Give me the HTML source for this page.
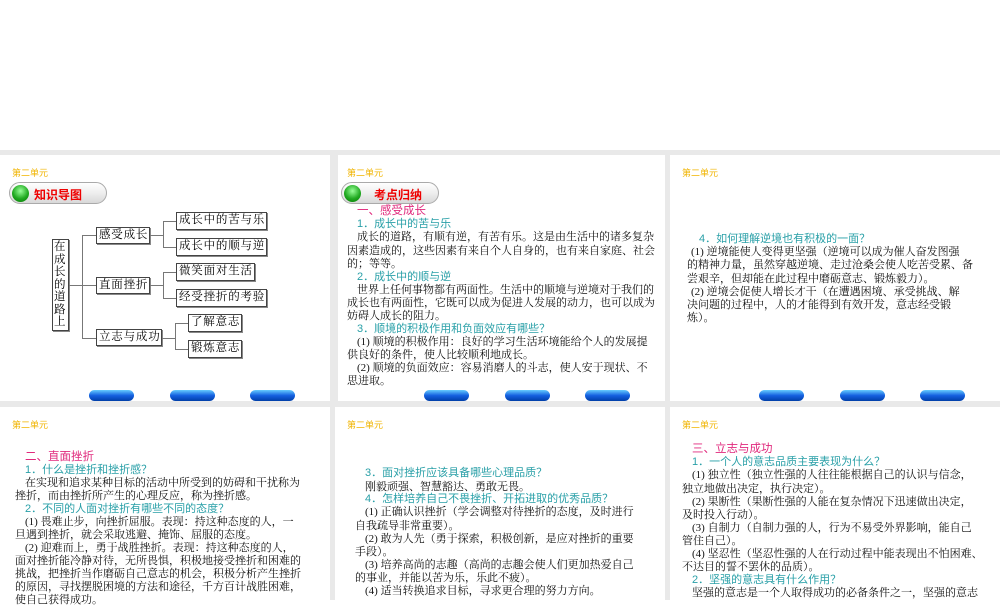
<!DOCTYPE html>
<html><head><meta charset="utf-8"><style>
*{margin:0;padding:0;box-sizing:border-box}
body{width:1000px;height:600px;background:#fff;position:relative;overflow:hidden;font-family:"Liberation Serif","Noto Serif CJK SC","Noto Sans CJK SC",serif}
.bg{position:absolute;left:0;top:150px;width:1000px;height:450px;background:#e9e9e9}
.s{position:absolute;background:#fff;overflow:hidden}
.u{position:absolute;left:12px;top:166px;font-size:9px;color:#f0b400;font-family:"Liberation Sans","Noto Sans CJK SC",sans-serif}
.pill{position:absolute;width:98px;height:22px;border:1px solid #aaa;border-radius:11px;background:linear-gradient(#fff,#eee 50%,#d8d8d8);}
.pill i{position:absolute;left:2px;top:2px;width:17px;height:17px;border-radius:50%;background:radial-gradient(circle at 50% 35%,#9f9,#2a2 55%,#070);}
.pill b{position:absolute;top:3px;font-size:12px;color:#e00;font-family:"Liberation Sans","Noto Sans CJK SC",sans-serif}
.btn{position:absolute;width:45px;height:11px;border-radius:6px;background:linear-gradient(#6cf,#1560e0 50%,#003fa8);}
.l{position:absolute;white-space:nowrap;font-size:11px;line-height:13px;color:#111}
.p{color:#e0287c;font-family:"Liberation Sans","Noto Sans CJK SC",sans-serif;font-size:11.5px}
.t{color:#2aa0a8;font-family:"Liberation Sans","Noto Sans CJK SC",sans-serif}
.bx{position:absolute;border:1px solid #444;box-shadow:1px 1px 0 #888;font-size:11.5px;letter-spacing:0.8px;line-height:15px;padding-left:2px;white-space:nowrap;background:#fff;overflow:hidden}
.ln{position:absolute;background:#777}
</style></head><body>
<div class="bg"></div>
<div class="s" style="left:0;top:155px;width:330px;height:246px"></div>
<div class="s" style="left:338px;top:155px;width:327px;height:246px"></div>
<div class="s" style="left:670px;top:155px;width:330px;height:246px"></div>
<div class="s" style="left:0;top:407px;width:330px;height:193px"></div>
<div class="s" style="left:335px;top:407px;width:330px;height:193px"></div>
<div class="s" style="left:670px;top:407px;width:330px;height:193px"></div>

<div class="u">第二单元</div>
<div class="u" style="left:347px">第二单元</div>
<div class="u" style="left:682px">第二单元</div>
<div class="u" style="top:418px">第二单元</div>
<div class="u" style="left:347px;top:418px">第二单元</div>
<div class="u" style="left:682px;top:418px">第二单元</div>

<div class="pill" style="left:9px;top:182px"><i></i><b style="left:24px">知识导图</b></div>
<div class="pill" style="left:341px;top:182px"><i></i><b style="left:32px">考点归纳</b></div>

<div class="btn" style="left:89px;top:390px"></div><div class="btn" style="left:170px;top:390px"></div><div class="btn" style="left:250px;top:390px"></div>
<div class="btn" style="left:424px;top:390px"></div><div class="btn" style="left:505px;top:390px"></div><div class="btn" style="left:585px;top:390px"></div>
<div class="btn" style="left:759px;top:390px"></div><div class="btn" style="left:840px;top:390px"></div><div class="btn" style="left:920px;top:390px"></div>

<div class="bx" style="left:52px;top:239px;width:17px;height:92px;white-space:normal;padding:1px 1px;letter-spacing:0;line-height:12.5px">在成长的道路上</div>
<div class="ln" style="left:69px;top:285px;width:13px;height:1px"></div>
<div class="ln" style="left:82px;top:235px;width:1px;height:103px"></div>
<div class="ln" style="left:82px;top:235px;width:14px;height:1px"></div>
<div class="ln" style="left:82px;top:285px;width:14px;height:1px"></div>
<div class="ln" style="left:82px;top:338px;width:14px;height:1px"></div>
<div class="bx" style="left:96px;top:227px;width:54px;height:17px">感受成长</div>
<div class="bx" style="left:96px;top:277px;width:54px;height:17px">直面挫折</div>
<div class="bx" style="left:96px;top:329px;width:66px;height:17px">立志与成功</div>
<div class="ln" style="left:150px;top:235px;width:13px;height:1px"></div>
<div class="ln" style="left:163px;top:221px;width:1px;height:26px"></div>
<div class="ln" style="left:163px;top:221px;width:13px;height:1px"></div>
<div class="ln" style="left:163px;top:247px;width:13px;height:1px"></div>
<div class="ln" style="left:150px;top:285px;width:13px;height:1px"></div>
<div class="ln" style="left:163px;top:272px;width:1px;height:26px"></div>
<div class="ln" style="left:163px;top:272px;width:13px;height:1px"></div>
<div class="ln" style="left:163px;top:298px;width:13px;height:1px"></div>
<div class="ln" style="left:162px;top:338px;width:13px;height:1px"></div>
<div class="ln" style="left:175px;top:323px;width:1px;height:26px"></div>
<div class="ln" style="left:175px;top:323px;width:13px;height:1px"></div>
<div class="ln" style="left:175px;top:349px;width:13px;height:1px"></div>
<div class="bx" style="left:176px;top:212px;width:91px;height:18px">成长中的苦与乐</div>
<div class="bx" style="left:176px;top:238px;width:91px;height:18px">成长中的顺与逆</div>
<div class="bx" style="left:176px;top:263px;width:79px;height:18px">微笑面对生活</div>
<div class="bx" style="left:176px;top:289px;width:91px;height:18px">经受挫折的考验</div>
<div class="bx" style="left:188px;top:314px;width:54px;height:18px">了解意志</div>
<div class="bx" style="left:188px;top:340px;width:54px;height:18px">锻炼意志</div>

<div class="l p" style="left:357px;top:205px">一、感受成长</div>
<div class="l t" style="left:357px;top:218px">1．成长中的苦与乐</div>
<div class="l" style="left:357px;top:231px">成长的道路，有顺有逆，有苦有乐。这是由生活中的诸多复杂</div>
<div class="l" style="left:347px;top:245px">因素造成的，这些因素有来自个人自身的，也有来自家庭、社会</div>
<div class="l" style="left:347px;top:258px">的；等等。</div>
<div class="l t" style="left:357px;top:271px">2．成长中的顺与逆</div>
<div class="l" style="left:357px;top:284px">世界上任何事物都有两面性。生活中的顺境与逆境对于我们的</div>
<div class="l" style="left:347px;top:297px">成长也有两面性，它既可以成为促进人发展的动力，也可以成为</div>
<div class="l" style="left:347px;top:310px">妨碍人成长的阻力。</div>
<div class="l t" style="left:357px;top:323px">3．顺境的积极作用和负面效应有哪些？</div>
<div class="l" style="left:357px;top:336px">(1) 顺境的积极作用：良好的学习生活环境能给个人的发展提</div>
<div class="l" style="left:347px;top:349px">供良好的条件，使人比较顺利地成长。</div>
<div class="l" style="left:357px;top:362px">(2) 顺境的负面效应：容易消磨人的斗志，使人安于现状、不</div>
<div class="l" style="left:347px;top:375px">思进取。</div>

<div class="l t" style="left:699px;top:233px">4．如何理解逆境也有积极的一面？</div>
<div class="l" style="left:691px;top:246px">(1) 逆境能使人变得更坚强（逆境可以成为催人奋发图强</div>
<div class="l" style="left:687px;top:259px">的精神力量，虽然穿越逆境、走过沧桑会使人吃苦受累、备</div>
<div class="l" style="left:687px;top:273px">尝艰辛，但却能在此过程中磨砺意志、锻炼毅力）。</div>
<div class="l" style="left:691px;top:286px">(2) 逆境会促使人增长才干（在遭遇困境、承受挑战、解</div>
<div class="l" style="left:687px;top:299px">决问题的过程中，人的才能得到有效开发，意志经受锻</div>
<div class="l" style="left:687px;top:312px">炼）。</div>

<div class="l p" style="left:25px;top:451px">二、直面挫折</div>
<div class="l t" style="left:25px;top:464px">1．什么是挫折和挫折感？</div>
<div class="l" style="left:25px;top:477px">在实现和追求某种目标的活动中所受到的妨碍和干扰称为</div>
<div class="l" style="left:15px;top:490px">挫折，而由挫折所产生的心理反应，称为挫折感。</div>
<div class="l t" style="left:25px;top:503px">2．不同的人面对挫折有哪些不同的态度？</div>
<div class="l" style="left:25px;top:516px">(1) 畏难止步，向挫折屈服。表现：持这种态度的人，一</div>
<div class="l" style="left:15px;top:529px">旦遇到挫折，就会采取逃避、掩饰、屈服的态度。</div>
<div class="l" style="left:25px;top:542px">(2) 迎难而上，勇于战胜挫折。表现：持这种态度的人，</div>
<div class="l" style="left:15px;top:555px">面对挫折能冷静对待，无所畏惧，积极地接受挫折和困难的</div>
<div class="l" style="left:15px;top:568px">挑战，把挫折当作磨砺自己意志的机会，积极分析产生挫折</div>
<div class="l" style="left:15px;top:581px">的原因，寻找摆脱困境的方法和途径，千方百计战胜困难，</div>
<div class="l" style="left:15px;top:594px">使自己获得成功。</div>

<div class="l t" style="left:365px;top:467px">3．面对挫折应该具备哪些心理品质？</div>
<div class="l" style="left:365px;top:481px">刚毅顽强、智慧豁达、勇敢无畏。</div>
<div class="l t" style="left:365px;top:493px">4．怎样培养自己不畏挫折、开拓进取的优秀品质？</div>
<div class="l" style="left:365px;top:506px">(1) 正确认识挫折（学会调整对待挫折的态度，及时进行</div>
<div class="l" style="left:355px;top:520px">自我疏导非常重要）。</div>
<div class="l" style="left:365px;top:533px">(2) 敢为人先（勇于探索，积极创新，是应对挫折的重要</div>
<div class="l" style="left:355px;top:546px">手段）。</div>
<div class="l" style="left:365px;top:559px">(3) 培养高尚的志趣（高尚的志趣会使人们更加热爱自己</div>
<div class="l" style="left:355px;top:572px">的事业，并能以苦为乐，乐此不疲）。</div>
<div class="l" style="left:365px;top:585px">(4) 适当转换追求目标，寻求更合理的努力方向。</div>

<div class="l p" style="left:692px;top:443px">三、立志与成功</div>
<div class="l t" style="left:692px;top:456px">1．一个人的意志品质主要表现为什么？</div>
<div class="l" style="left:692px;top:469px">(1) 独立性（独立性强的人往往能根据自己的认识与信念，</div>
<div class="l" style="left:682px;top:483px">独立地做出决定，执行决定）。</div>
<div class="l" style="left:692px;top:496px">(2) 果断性（果断性强的人能在复杂情况下迅速做出决定，</div>
<div class="l" style="left:682px;top:509px">及时投入行动）。</div>
<div class="l" style="left:692px;top:522px">(3) 自制力（自制力强的人，行为不易受外界影响，能自己</div>
<div class="l" style="left:682px;top:535px">管住自己）。</div>
<div class="l" style="left:692px;top:548px">(4) 坚忍性（坚忍性强的人在行动过程中能表现出不怕困难、</div>
<div class="l" style="left:682px;top:561px">不达目的誓不罢休的品质）。</div>
<div class="l t" style="left:692px;top:574px">2．坚强的意志具有什么作用？</div>
<div class="l" style="left:692px;top:587px">坚强的意志是一个人取得成功的必备条件之一，坚强的意志</div>
</body></html>
